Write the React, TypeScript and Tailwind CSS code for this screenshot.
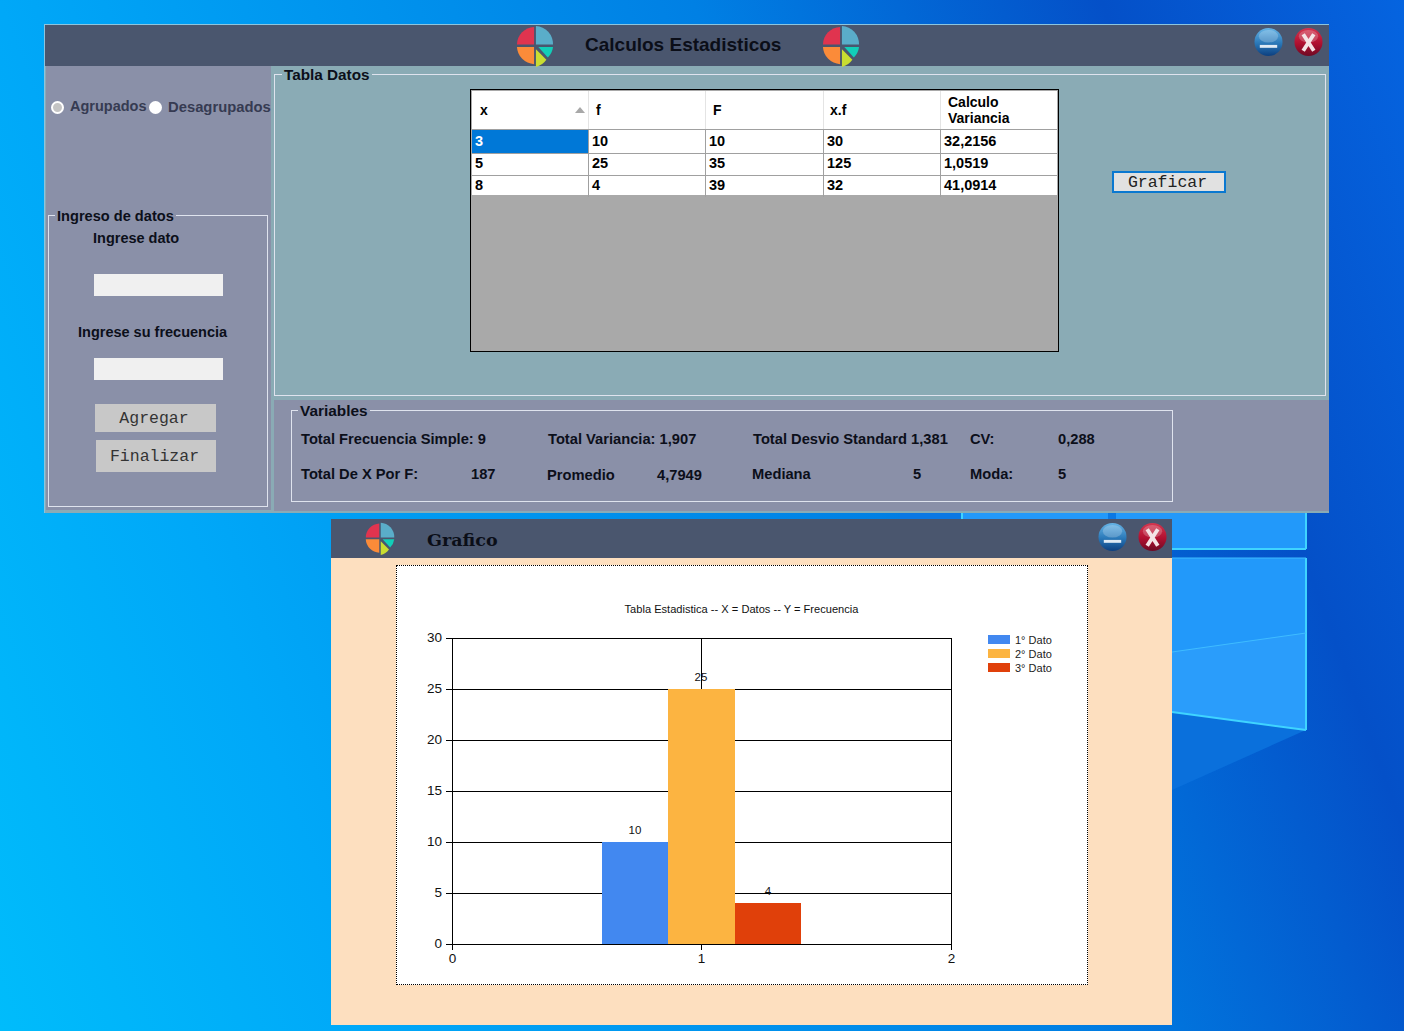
import React from 'react';

const sans = "font-['Liberation_Sans',Arial,sans-serif]";

function Pie({ className }: { className: string }) {
  return (
    <svg viewBox="0 0 40 44" preserveAspectRatio="none" className={className}>
      <path d="M19 20.5V2A19 19 0 0 0 1 20.5Z" fill="#e0344f" />
      <path d="M21 20.5V1A19 19 0 0 1 39 20.5Z" fill="#5aadc9" />
      <path d="M19 23V41A19 19 0 0 1 1 23Z" fill="#fb8b39" />
      <path d="M23.5 23H39A19 19 0 0 1 33.5 34Z" fill="#12ceb8" />
      <path d="M21 25.5L32 36.5A19 19 0 0 1 21 44Z" fill="#c9dd31" />
    </svg>
  );
}

function RoundButton({ kind }: { kind: 'min' | 'close' }) {
  const id = `${kind}-glow`;
  const top = kind === 'min' ? '#66b4e6' : '#d4364f';
  const mid = kind === 'min' ? '#2a78b8' : '#b01030';
  const low = kind === 'min' ? '#0c3f7f' : '#6e0a24';
  return (
    <svg viewBox="0 0 30 30" className="h-[30px] w-[29px] shrink-0">
      <defs>
        <linearGradient id={id} x1="0" y1="0" x2="0" y2="1">
          <stop offset="0" stopColor={top} />
          <stop offset="0.55" stopColor={mid} />
          <stop offset="1" stopColor={low} />
        </linearGradient>
      </defs>
      <circle cx="15" cy="15" r="14.5" fill={`url(#${id})`} />
      <ellipse cx="15" cy="9" rx="10" ry="6.5" fill="#ffffff" opacity="0.22" />
      {kind === 'min' ? (
        <rect x="6" y="18" width="18" height="3" fill="#dfeaf4" />
      ) : (
        <path d="M9.5 7L20.5 24M20.5 7L9.5 24" fill="none" stroke="#f4e4e6" strokeWidth="4" />
      )}
    </svg>
  );
}

function Legend({ text, className }: { text: string; className: string }) {
  return (
    <span className={`absolute top-[-8px] px-[2px] leading-[16px] font-bold whitespace-nowrap text-[#0c0f1a] ${className}`}>
      {text}
    </span>
  );
}

const rows = [
  ['3', '10', '10', '30', '32,2156'],
  ['5', '25', '35', '125', '1,0519'],
  ['8', '4', '39', '32', '41,0914'],
];

function DataTable() {
  return (
    <div className="ml-[195px] mt-[14px] h-[263px] w-[589px] shrink-0 border border-black bg-[#a9a9a9] p-px text-[14.5px] font-bold text-black">
      <div className="grid h-[39px] grid-cols-[117px_117px_118px_117px_116px] border-b border-[#a0a0a0] bg-white text-[14px] leading-[16px]">
        <div className="flex items-center justify-between border-r border-[#e4e4e4] pl-2 pr-[3px]">
          <span>x</span>
          <svg viewBox="0 0 10 6" className="h-[6px] w-[10px]"><path d="M0 6L5 0 10 6Z" fill="#a8a8a8" /></svg>
        </div>
        <div className="flex items-center border-r border-[#e4e4e4] pl-[7px]">f</div>
        <div className="flex items-center border-r border-[#e4e4e4] pl-[7px]">F</div>
        <div className="flex items-center border-r border-[#e4e4e4] pl-[6px]">x.f</div>
        <div className="flex items-center pl-[7px]">Calculo<br />Variancia</div>
      </div>
      {rows.map((row, r) => (
        <div key={r} className={`grid grid-cols-[117px_117px_118px_117px_116px] bg-white leading-[23px] ${r === 2 ? 'h-[21px]' : 'h-[22px]'}`}>
          {row.map((cell, c) => (
            <div
              key={c}
              className={`border-r border-[#a0a0a0] pl-[3px] last:border-r-0 ${r === 0 && c === 0 ? 'bg-[#0078d7] text-white' : ''} ${r === 2 ? '' : 'border-b'}`}
            >
              {cell}
            </div>
          ))}
        </div>
      ))}
    </div>
  );
}

function Variables() {
  const cell = 'shrink-0 whitespace-nowrap';
  return (
    <div className="relative ml-[17px] mt-[10px] h-[92px] w-[882px] border border-[#dfe3ee] pl-[9px] pt-[20px] text-[14.7px] leading-[16px] font-bold text-[#0c0f1a]">
      <Legend text="Variables" className="left-[6px] bg-[#8a90a8] text-[15.4px]" />
      <div className="flex">
        <span className={`${cell} w-[247px]`}>Total Frecuencia Simple: 9</span>
        <span className={`${cell} w-[205px]`}>Total Variancia: 1,907</span>
        <span className={`${cell} w-[217px]`}>Total Desvio Standard 1,381</span>
        <span className={`${cell} w-[88px]`}>CV:</span>
        <span className={cell}>0,288</span>
      </div>
      <div className="mt-[19px] flex">
        <span className={`${cell} w-[170px]`}>Total De X Por F:</span>
        <span className={`${cell} w-[76px]`}>187</span>
        <span className={`${cell} mt-px w-[110px]`}>Promedio</span>
        <span className={`${cell} mt-px w-[95px]`}>4,7949</span>
        <span className={`${cell} w-[161px]`}>Mediana</span>
        <span className={`${cell} w-[57px]`}>5</span>
        <span className={`${cell} w-[88px]`}>Moda:</span>
        <span className={cell}>5</span>
      </div>
    </div>
  );
}

function MainWindow() {
  return (
    <div className={`absolute left-[44px] top-[24px] flex h-[489px] w-[1285px] flex-col border-t border-l border-[#8cc4de] bg-[#8aabb5] ${sans}`}>
      <div className="flex h-[41px] shrink-0 items-center bg-[#4a566e] pl-[471px] pr-[6px]">
        <Pie className="h-[42px] w-[38px] shrink-0" />
        <span className="ml-[31px] w-[196px] text-[19px] font-bold whitespace-nowrap text-[#0b0e18]">Calculos Estadisticos</span>
        <Pie className="ml-[41px] h-[42px] w-[38px] shrink-0" />
        <div className="ml-auto mb-[8px] flex gap-[11px]">
          <RoundButton kind="min" />
          <RoundButton kind="close" />
        </div>
      </div>
      <div className="flex min-h-0 flex-1">
        <div className="mb-[3px] ml-px w-[225px] shrink-0 bg-[#8a90a8] pt-[31px]">
          <div className="flex h-[20px] items-center pl-[5px] text-[14.5px] font-bold whitespace-nowrap text-[#363b52]">
            <span className="h-[13px] w-[13px] shrink-0 rounded-full border-2 border-white bg-[#c4c4c4]" />
            <span className="ml-[6px] w-[79px]">Agrupados</span>
            <span className="h-[13px] w-[13px] shrink-0 rounded-full bg-white" />
            <span className="ml-[6px] text-[14.8px]">Desagrupados</span>
          </div>
          <div className="relative ml-[2px] mt-[98px] flex h-[292px] w-[220px] flex-col items-start border border-[#dfe3ee] text-[14.5px] leading-[16px] font-bold text-[#0c0f1a]">
            <Legend text="Ingreso de datos" className="left-[6px] bg-[#8a90a8] text-[14.6px]" />
            <span className="ml-[44px] mt-[14px] whitespace-nowrap">Ingrese dato</span>
            <div className="ml-[45px] mt-[28px] h-[22px] w-[129px] bg-[#f0f0f0]" />
            <span className="ml-[29px] mt-[28px] whitespace-nowrap">Ingrese su frecuencia</span>
            <div className="ml-[45px] mt-[18px] h-[22px] w-[129px] bg-[#f0f0f0]" />
            <button className="ml-[46px] mt-[24px] h-[28px] w-[121px] bg-[#c8c8c8] pr-[3px] pt-[2px] font-['Liberation_Mono',monospace] text-[16.5px] font-normal text-[#333]">Agregar</button>
            <button className="ml-[47px] mt-[8px] h-[32px] w-[120px] bg-[#c8c8c8] pr-[3px] pt-[2px] font-['Liberation_Mono',monospace] text-[16.5px] font-normal text-[#333]">Finalizar</button>
          </div>
        </div>
        <div className="flex min-w-0 flex-1 flex-col">
          <div className="h-[334px] shrink-0 pb-[4px] pl-[3px] pr-[3px] pt-[8px]">
            <div className="relative flex h-[322px] items-start border border-[#dfe3ee]">
              <Legend text="Tabla Datos" className="left-[7px] bg-[#8aabb5] text-[15.3px]" />
              <DataTable />
              <button className="ml-[53px] mt-[96px] h-[22px] w-[114px] shrink-0 border-2 border-[#0a78d0] bg-[#e1e1e1] pr-[3px] pt-px font-['Liberation_Mono',monospace] text-[16.5px] leading-[18px] text-[#222]">Graficar</button>
            </div>
          </div>
          <div className="mb-[2px] ml-[3px] flex-1 bg-[#8a90a8]">
            <Variables />
          </div>
        </div>
      </div>
    </div>
  );
}

const gridY = [638, 689, 740, 791, 842, 893, 944];
const yLabels = ['30', '25', '20', '15', '10', '5', '0'];
const legendItems = [
  { label: '1° Dato', y: 635, color: '#4288f0' },
  { label: '2° Dato', y: 649, color: '#fcb441' },
  { label: '3° Dato', y: 663, color: '#e0400a' },
];

function Chart() {
  return (
    <svg viewBox="397 566 690 418" className="h-[418px] w-[690px] font-['Liberation_Sans',Arial,sans-serif]">
      <text x="741.5" y="613" textAnchor="middle" fontSize="11.1" fill="#111">Tabla Estadistica -- X = Datos -- Y = Frecuencia</text>
      {gridY.map((y, i) => (
        <g key={y}>
          <line x1="446" x2="952" y1={y + 0.5} y2={y + 0.5} stroke="#000" />
          <text x="442" y={y + 3.5} textAnchor="end" fontSize="13.5" fill="#111">{yLabels[i]}</text>
        </g>
      ))}
      <line x1="452.5" x2="452.5" y1="638" y2="950" stroke="#000" />
      <line x1="701.5" x2="701.5" y1="638" y2="950" stroke="#000" />
      <line x1="951.5" x2="951.5" y1="638" y2="950" stroke="#000" />
      <rect x="602" y="842" width="66" height="102" fill="#4288f0" />
      <rect x="668" y="689" width="67" height="255" fill="#fcb441" />
      <rect x="735" y="903" width="66" height="41" fill="#e0400a" />
      <text x="635" y="834" textAnchor="middle" fontSize="11.5" fill="#111">10</text>
      <text x="701" y="681" textAnchor="middle" fontSize="11.5" fill="#111">25</text>
      <text x="768" y="895" textAnchor="middle" fontSize="11.5" fill="#111">4</text>
      <text x="452.5" y="963" textAnchor="middle" fontSize="13.5" fill="#111">0</text>
      <text x="701.5" y="963" textAnchor="middle" fontSize="13.5" fill="#111">1</text>
      <text x="951.5" y="963" textAnchor="middle" fontSize="13.5" fill="#111">2</text>
      {legendItems.map((item) => (
        <g key={item.label}>
          <rect x="988" y={item.y} width="22" height="9" fill={item.color} />
          <text x="1015" y={item.y + 9} fontSize="11" fill="#222">{item.label}</text>
        </g>
      ))}
    </svg>
  );
}

function ChartWindow() {
  return (
    <div className="absolute left-[331px] top-[519px] flex h-[506px] w-[841px] flex-col bg-[#fddfbf]">
      <div className="flex h-[39px] shrink-0 items-center bg-[#4a566e] pl-[34px] pr-[5px]">
        <Pie className="h-[33px] w-[30px] shrink-0" />
        <span className="ml-[32px] pt-[4px] font-['DejaVu_Serif',serif] text-[17.5px] font-bold text-[#0b0e18]">Grafico</span>
        <div className="ml-auto mb-[3px] flex gap-[11px]">
          <RoundButton kind="min" />
          <RoundButton kind="close" />
        </div>
      </div>
      <div className="pl-[65px] pt-[7px]">
        <div className="h-[420px] w-[692px] border border-dotted border-black bg-white">
          <Chart />
        </div>
      </div>
    </div>
  );
}

function Wallpaper() {
  return (
    <svg viewBox="0 0 1404 1031" className="absolute inset-0 h-full w-full">
      <path d="M900 513H1306V550H900Z" fill="#0a78e4" />
      <path d="M962 513H1108V519H962Z" fill="#2299fa" />
      <path d="M1116 513H1306V549H1116Z" fill="#2299fa" />
      <path d="M1172 558H1306V730L1172 712Z" fill="#2299fa" />
      <path d="M1172 652L1306 633V730L1172 712Z" fill="#2a9dfb" />
      <path d="M1172 712L1306 730 1172 790Z" fill="#0a70dc" />
      <path d="M962 513V519M1306 513V549M1306 558V730M1172 549H1306M1172 712L1306 730" stroke="#3fd4ff" strokeWidth="2" fill="none" />
      <path d="M1172 558H1306" stroke="#3fbcff" fill="none" />
      <path d="M1172 652L1306 633" stroke="#3fbcff" fill="none" />
    </svg>
  );
}

export default function App() {
  return (
    <div className="relative h-[1031px] w-[1404px] overflow-hidden bg-[linear-gradient(70deg,#00bcfb_0%,#00a8f8_21%,#0080e4_60%,#0450c8_83%,#0564e0_100%)]">
      <Wallpaper />
      <MainWindow />
      <ChartWindow />
    </div>
  );
}
